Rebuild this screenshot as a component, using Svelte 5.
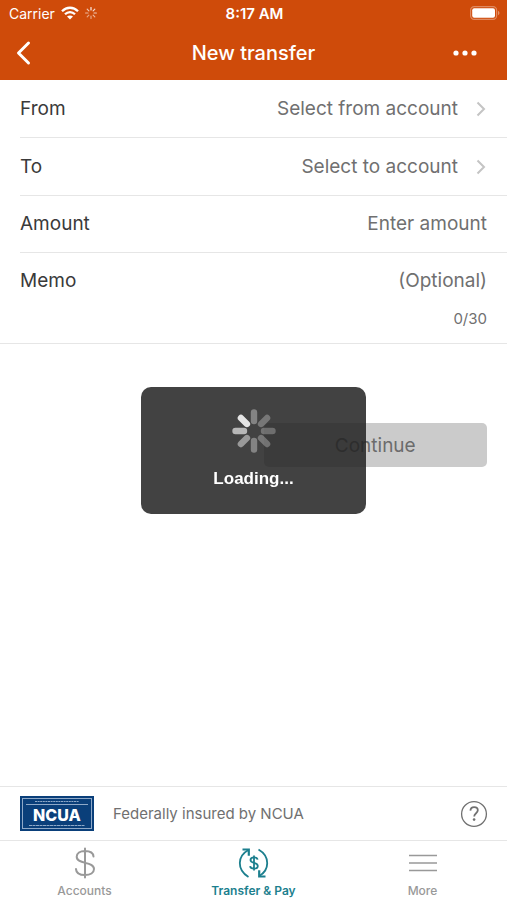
<script lang="ts">
	const maxMemo = 30;

	let amount = $state('');
	let memo = $state('');
	let loading = $state(true);

	// Spoke opacity, clockwise from twelve o'clock.
	const spokes = [0.34, 0.28, 0.26, 0.28, 0.34, 0.46, 0.62, 0.86];
	const statusSpokes = [0.9, 0.8, 0.7, 0.6, 0.5, 0.5, 0.6, 0.7];
</script>

<div class="screen">
	<header>
		<div class="status">
			<span class="carrier">
				Carrier
				<svg width="18" height="14" viewBox="0 0 18 14" aria-hidden="true">
					<g fill="none" stroke="#fff" stroke-width="2.3">
						<path d="M1 5.2C5.6 .6 12.4 .6 17 5.2" />
						<path d="M4 8.3c2.9-2.9 7.1-2.9 10 0" />
					</g>
					<path fill="#fff" d="M9 13.6 6 10.6c1.8-1.6 4.2-1.6 6 0z" />
				</svg>
				<svg width="12" height="12" viewBox="-6 -6 12 12" aria-hidden="true">
					{#each statusSpokes as opacity, i}
						<path
							d="M0-3v-2.4"
							stroke="#fff"
							stroke-width="1.2"
							stroke-linecap="round"
							{opacity}
							transform="rotate({i * 45})"
						/>
					{/each}
				</svg>
			</span>
			<span class="time">8:17 AM</span>
			<svg class="battery" width="30" height="14" viewBox="0 0 30 14" aria-hidden="true">
				<rect x=".6" y=".6" width="26" height="12.8" rx="3.6" fill="none" stroke="#fff" stroke-opacity=".35" stroke-width="1.2" />
				<rect x="2.2" y="2.2" width="22.8" height="9.6" rx="2" fill="#fff" />
				<path d="M28 4.8c2 .8 2 3.6 0 4.4z" fill="#fff" fill-opacity=".4" />
			</svg>
		</div>
		<nav class="bar">
			<button class="icon" aria-label="Back">
				<svg width="16" height="26" viewBox="0 0 16 26">
					<path d="M12.5 3 2.5 13l10 10" fill="none" stroke="#fff" stroke-width="3" stroke-linecap="round" stroke-linejoin="round" />
				</svg>
			</button>
			<h1>New transfer</h1>
			<button class="icon end" aria-label="More options">
				<svg width="24" height="6" viewBox="0 0 24 6" fill="#fff">
					<circle cx="3" cy="3" r="2.6" />
					<circle cx="12" cy="3" r="2.6" />
					<circle cx="21" cy="3" r="2.6" />
				</svg>
			</button>
		</nav>
	</header>

	<main>
		<form onsubmit={(e) => e.preventDefault()}>
			<div class="row">
				<label for="from">From</label>
				<button type="button" id="from" class="picker">
					Select from account
					<svg width="10" height="16" viewBox="0 0 10 16">
						<path d="M1.5 1.5 8 8l-6.5 6.5" fill="none" stroke="#c4c4c4" stroke-width="2" />
					</svg>
				</button>
			</div>
			<div class="row">
				<label for="to">To</label>
				<button type="button" id="to" class="picker">
					Select to account
					<svg width="10" height="16" viewBox="0 0 10 16">
						<path d="M1.5 1.5 8 8l-6.5 6.5" fill="none" stroke="#c4c4c4" stroke-width="2" />
					</svg>
				</button>
			</div>
			<div class="row amount">
				<label for="amount">Amount</label>
				<input id="amount" inputmode="decimal" placeholder="Enter amount" bind:value={amount} />
			</div>
			<div class="row memo">
				<label for="memo">Memo</label>
				<input id="memo" maxlength={maxMemo} placeholder="(Optional)" bind:value={memo} />
				<span class="count">{memo.length}/{maxMemo}</span>
			</div>
			<div class="actions">
				<button class="continue" disabled>Continue</button>
			</div>
		</form>
	</main>

	<section class="insured">
		<svg class="seal" width="74" height="35" viewBox="0 0 74 35" aria-label="NCUA">
			<rect width="74" height="35" fill="#0a3f7a" />
			<rect x="2.5" y="2.5" width="69" height="30" fill="none" stroke="#8fa9c8" stroke-width="1" />
			<path d="M15 5.5h44" stroke="#8fa9c8" stroke-width="1.2" stroke-dasharray="2 .6" />
			<path d="M6 8.5h62" stroke="#8fa9c8" stroke-width="1.2" />
			<path d="M9 29.5h56" stroke="#8fa9c8" stroke-width="1.2" stroke-dasharray="3 .5" />
			<text x="37" y="25" text-anchor="middle">NCUA</text>
		</svg>
		<p>Federally insured by NCUA</p>
		<button class="icon" aria-label="Help">
			<svg width="28" height="28" viewBox="0 0 28 28" fill="none" stroke="#707070">
				<circle cx="14" cy="14" r="12.4" stroke-width="1.3" />
				<path d="M10.4 10.6c.2-2.3 1.7-3.4 3.7-3.4 2.2 0 3.7 1.2 3.7 3.1 0 3-3.6 2.9-3.6 6.2" stroke-width="1.8" />
				<circle cx="14.1" cy="19.6" r="1.3" fill="#707070" stroke="none" />
			</svg>
		</button>
	</section>

	<nav class="tabs">
		<a href="#accounts">
			<svg width="32" height="32" viewBox="0 0 32 32" fill="none" stroke="currentColor" stroke-width="2" stroke-linecap="round">
				<path d="M16 1.5v29M24.5 9.5c-.3-3.5-3.5-5.500-8.500-5.500s-8.300 2.200-8.300 5.800c0 8 17.300 4.200 17.300 12.300 0 3.700-3.700 6-9 6s-8.800-2.200-9-6" />
			</svg>
			Accounts
		</a>
		<a href="#transfer" class="active" aria-current="page">
			<svg width="32" height="32" viewBox="0 0 32 32" fill="none" stroke="currentColor" stroke-width="1.8">
				<path d="M10.5 30C-1.500 22.500-.5 9 10 3.200" />
				<path d="M4.500 2.500h6.300v6.300" stroke-width="2.200" />
				<path d="M20.500 2.500c12 7 11 20.500.8 26.500" />
				<path d="M27.500 29.500h-6.300v-6.300" stroke-width="2.200" />
				<path d="M16 8.500v15M19.600 12.600c-.3-1.500-1.700-2.200-3.600-2.200s-3.500.9-3.500 2.600c0 3.800 7.300 2.100 7.300 6 0 1.700-1.700 2.700-3.800 2.700s-3.700-.9-3.900-2.500" />
			</svg>
			Transfer &amp; Pay
		</a>
		<a href="#more">
			<svg width="32" height="32" viewBox="0 0 32 32" fill="none" stroke="currentColor" stroke-width="1.6">
				<path d="M2 8.5h28M2 16h28M2 23.5h28" />
			</svg>
			More
		</a>
	</nav>

	{#if loading}
		<div class="overlay">
			<div class="loader" role="status">
				<svg width="44" height="44" viewBox="-22 -22 44 44" aria-hidden="true">
					{#each spokes as opacity, i}
						<path
							d="M0-10v-8.5"
							stroke="#fff"
							stroke-width="6.4"
							stroke-linecap="round"
							{opacity}
							transform="rotate({i * 45})"
						/>
					{/each}
				</svg>
				Loading...
			</div>
		</div>
	{/if}
</div>

<style>
	:global(body) {
		margin: 0;
	}
	.screen {
		display: flex;
		flex-direction: column;
		min-height: 100vh;
		background: #fff;
		color: #3a3a3a;
		font-family: Inter, 'Liberation Sans', sans-serif;
	}
	button,
	input {
		border: 0;
		padding: 0;
		background: none;
		font: inherit;
		color: inherit;
	}
	svg {
		display: block;
		flex: none;
	}
	.icon {
		display: flex;
		align-items: center;
	}

	header {
		background: #cf4b0a;
		color: #fff;
	}
	.status {
		display: grid;
		grid-template-columns: 1fr auto 1fr;
		align-items: center;
		height: 26px;
		padding: 0 7px 0 9px;
		font-size: 14px;
	}
	.carrier {
		display: flex;
		align-items: center;
		gap: 6px;
	}
	.time {
		font-size: 15px;
		font-weight: 600;
	}
	.battery {
		justify-self: end;
	}
	.bar {
		display: grid;
		grid-template-columns: 1fr auto 1fr;
		align-items: center;
		height: 54px;
		padding: 0 16px;
	}
	h1 {
		margin: 0;
		font-size: 20px;
		font-weight: 500;
	}
	.end {
		justify-self: end;
		margin-right: 14px;
	}

	main {
		flex: 1;
	}
	.row {
		display: flex;
		align-items: center;
		height: 58px;
		margin-left: 20px;
		padding-right: 20px;
		box-sizing: border-box;
		border-bottom: 1px solid #e6e6e6;
		font-size: 19px;
		line-height: 24px;
	}
	.picker {
		display: flex;
		align-items: center;
		justify-content: flex-end;
		gap: 18px;
		flex: 1;
		padding-right: 1px;
		color: #707070;
	}
	.row input {
		flex: 1;
		min-width: 0;
		text-align: right;
		outline: none;
	}
	.row input::placeholder {
		color: #707070;
		opacity: 1;
	}
	.row.amount {
		height: 57px;
	}
	.row.memo {
		flex-wrap: wrap;
		row-gap: 14px;
		height: auto;
		margin-left: 0;
		padding: 16px 20px 12px;
	}
	.count {
		width: 100%;
		text-align: right;
		font-size: 15px;
		color: #707070;
	}
	.actions {
		display: grid;
		grid-template-columns: 1fr 1fr;
		gap: 20px;
		padding: 79px 20px 20px;
	}
	.continue {
		grid-column: 2;
		height: 44px;
		border-radius: 5px;
		background: #cbcbcb;
		color: #6c6c6c;
		font-size: 19px;
	}

	.insured {
		display: flex;
		align-items: center;
		gap: 19px;
		height: 54px;
		padding: 0 19px 0 20px;
		border-top: 1px solid #e6e6e6;
		box-sizing: border-box;
		color: #707070;
		font-size: 15px;
	}
	.insured p {
		flex: 1;
		margin: 0;
	}
	.seal text {
		fill: #fff;
		font-size: 16px;
		font-weight: 800;
	}

	.tabs {
		display: grid;
		grid-template-columns: repeat(3, 1fr);
		height: 60px;
		border-top: 1px solid #e6e6e6;
		box-sizing: border-box;
	}
	.tabs a {
		display: flex;
		flex-direction: column;
		align-items: center;
		gap: 4px;
		padding-top: 6px;
		color: #999;
		font-size: 12px;
		font-weight: 500;
		line-height: 16px;
		text-decoration: none;
	}
	.tabs .active {
		color: #1c7f8e;
		font-weight: 600;
	}

	.overlay {
		position: fixed;
		inset: 0;
		display: grid;
		place-items: center;
	}
	.loader {
		display: flex;
		flex-direction: column;
		align-items: center;
		gap: 16px;
		width: 225px;
		padding: 22px 0 25px;
		border-radius: 10px;
		background: rgb(35 35 35 / 86%);
		color: #fff;
		font: bold 17px/20px 'Liberation Sans', sans-serif;
	}
</style>
